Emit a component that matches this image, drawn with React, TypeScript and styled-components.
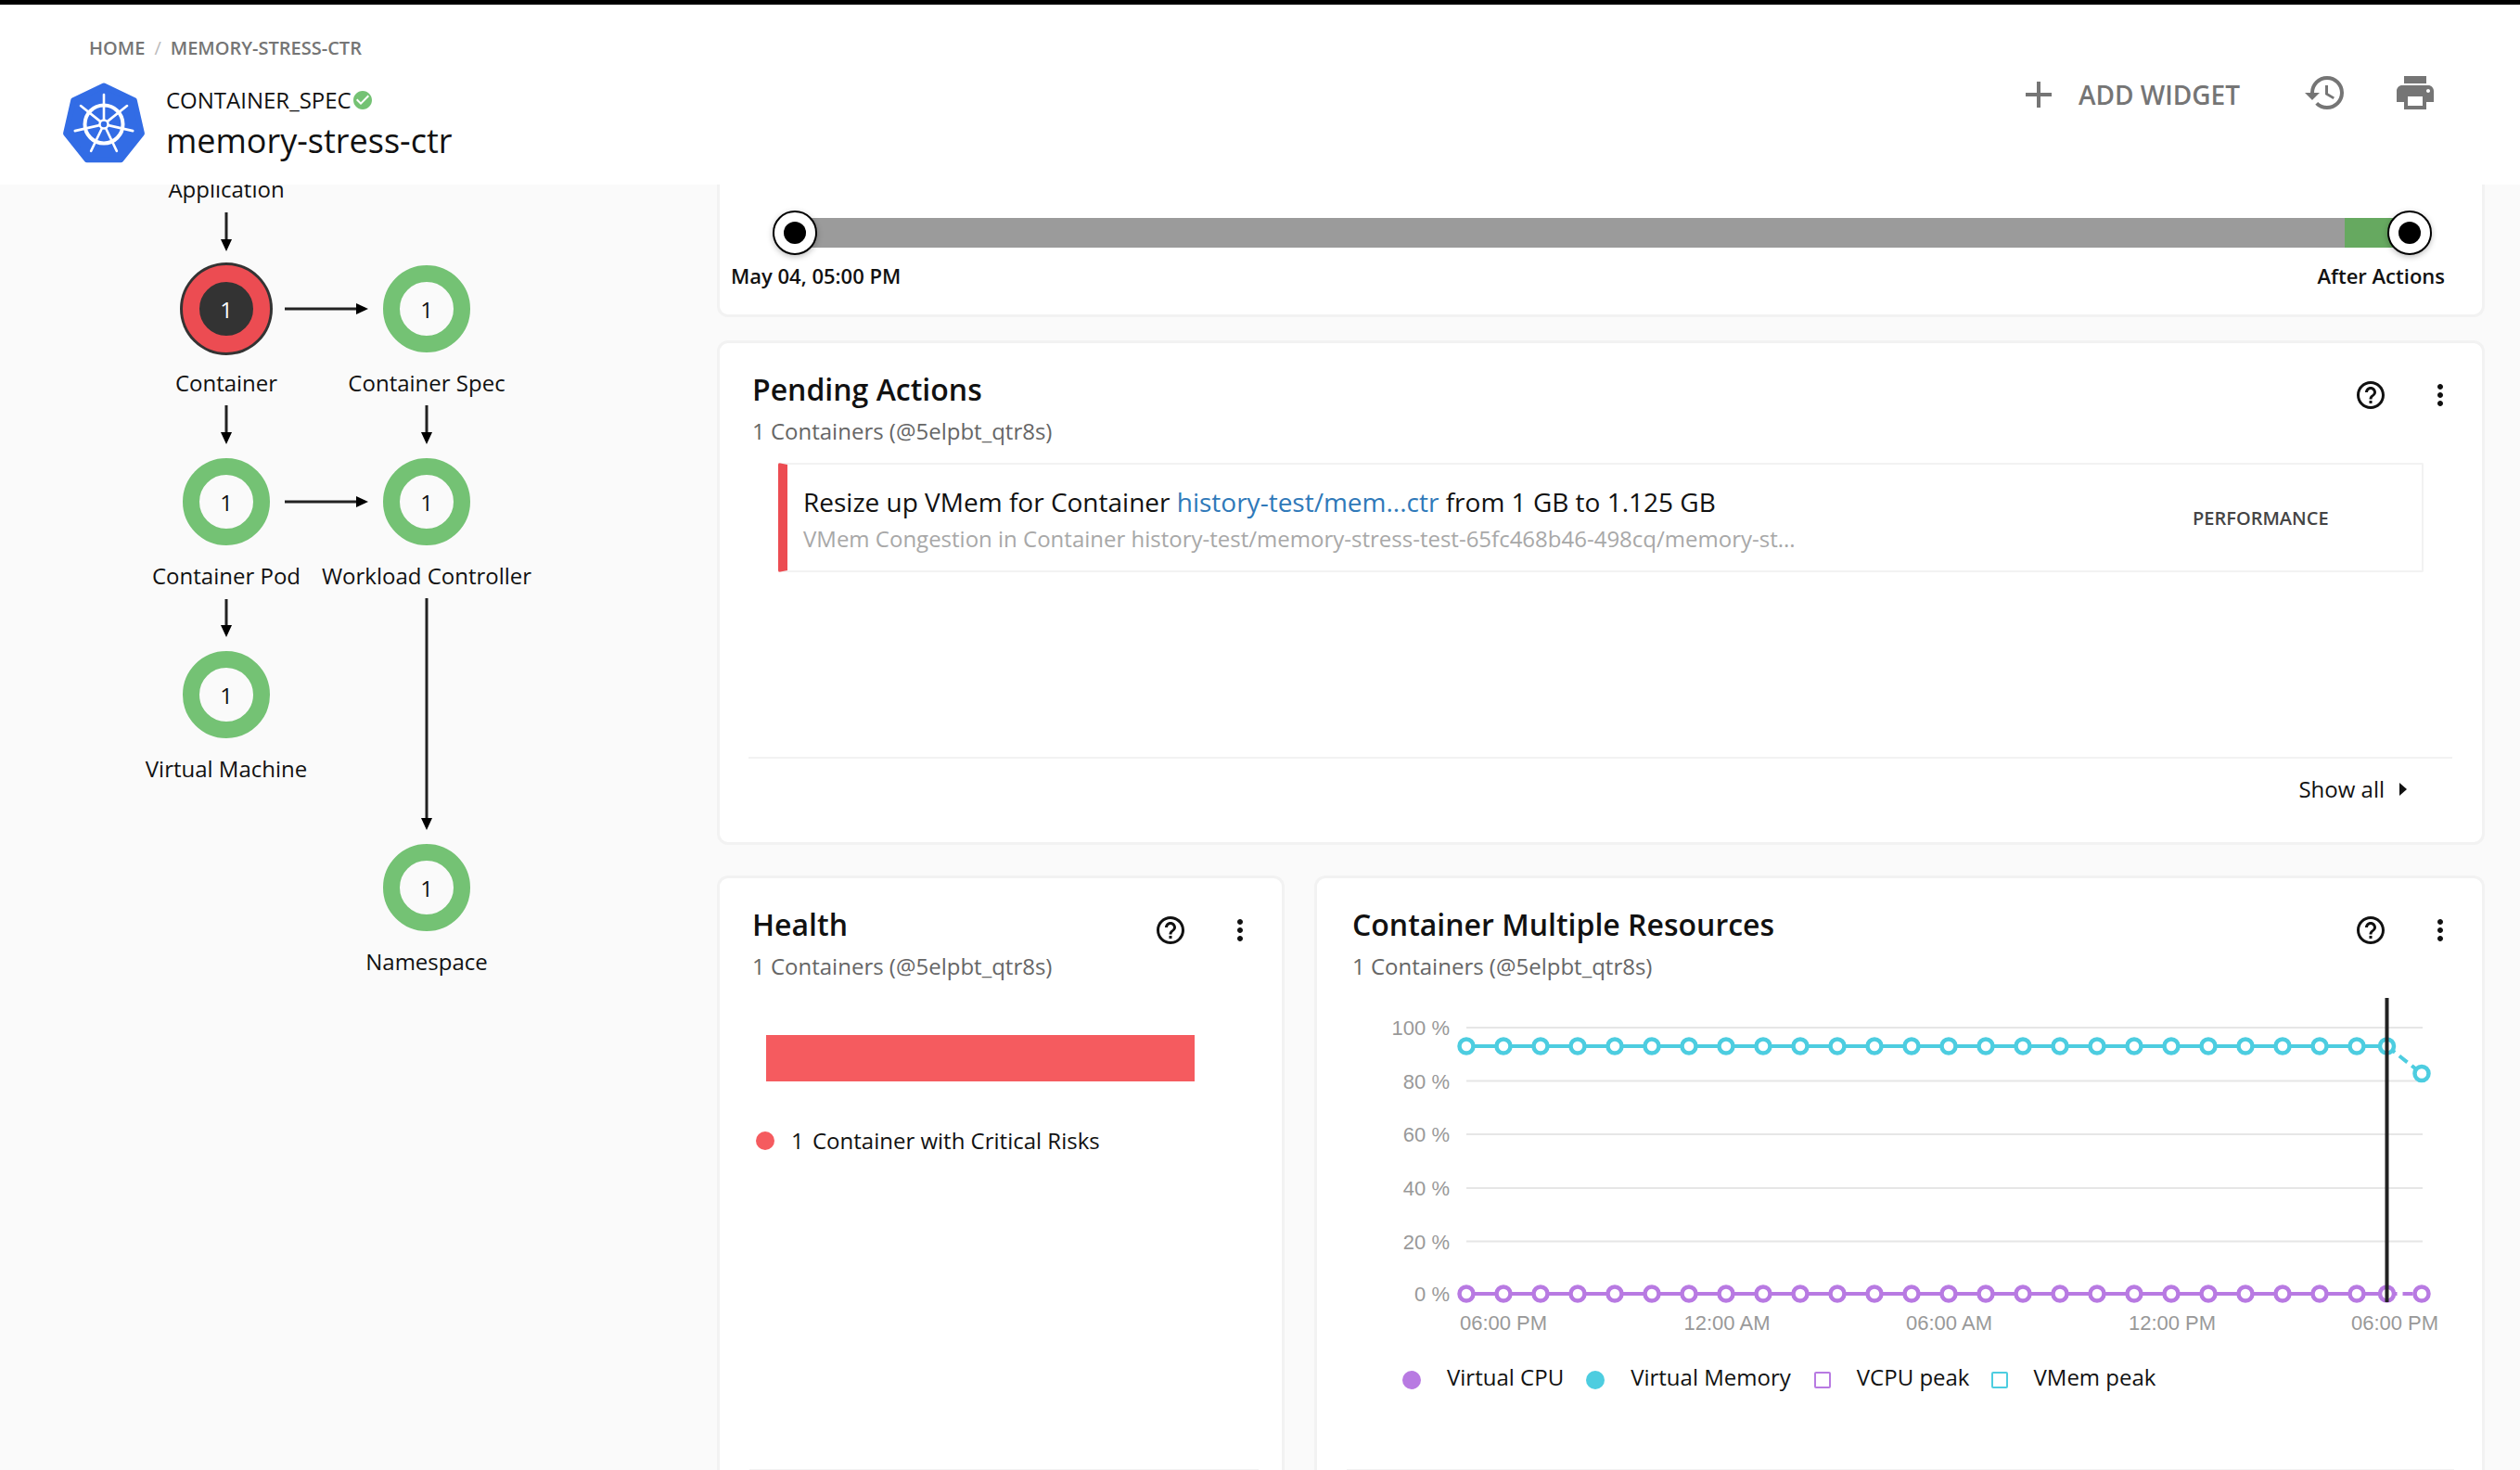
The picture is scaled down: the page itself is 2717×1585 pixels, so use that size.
import React from "react";
import styled, { createGlobalStyle } from "styled-components";
import { MdAdd, MdCheckCircle, MdHelpOutline, MdHistory, MdMoreVert, MdPrint } from "react-icons/md";

const GlobalStyle = createGlobalStyle`
  html, body {
    margin: 0;
    background: #fafafa;
    overflow: hidden;
    font-family: "Open Sans", "Liberation Sans", sans-serif;
  }
`;

const Page = styled.div`
  width: 2717px;
  height: 1585px;
  display: flex;
  flex-direction: column;
  overflow: hidden;
`;

const Header = styled.header`
  flex: none;
  box-sizing: border-box;
  height: 199px;
  border-top: 5px solid #000;
  background: #fff;
  display: flex;
  justify-content: space-between;
  padding: 33px 89px 0 67px;
  z-index: 1;
`;

const HeaderLeft = styled.div`
  display: flex;
  flex-direction: column;
`;

const Breadcrumbs = styled.div`
  margin-left: 29px;
  display: flex;
  gap: 10px;
  font-size: 20px;
  font-weight: 600;
  line-height: 28px;
  color: #757575;
`;

const Slash = styled.span`
  color: #bbb;
  font-weight: 400;
`;

const TitleRow = styled.div`
  margin-top: 23px;
  display: flex;
  gap: 22px;
`;

const TitleText = styled.div`
  padding-top: 3px;
  color: #111;
`;

const TypeRow = styled.div`
  display: flex;
  align-items: center;
  font-size: 24px;
  line-height: 32px;
`;

const EntityName = styled.div`
  margin-top: 4px;
  font-size: 36px;
  line-height: 48px;
`;

const HeaderActions = styled.div`
  margin-top: 38px;
  display: flex;
  align-items: flex-start;
  color: #757575;
`;

const AddWidget = styled.div`
  display: flex;
  align-items: center;
  gap: 19px;
  margin-right: 68px;
  font-size: 28px;
  font-weight: 600;
  line-height: 52px;
`;

const PrintWrap = styled.div`
  margin-left: 49px;
  height: 48px;
`;

const Body = styled.div`
  flex: 1;
  min-height: 0;
  display: flex;
`;

const Sidebar = styled.aside`
  position: relative;
  flex: none;
  width: 773px;
  overflow: hidden;
`;

const ArrowLayer = styled.svg`
  position: absolute;
  inset: 0;
  width: 773px;
  height: 1386px;
`;

const GraphNode = styled.div<{ $x: number; $y: number }>`
  position: absolute;
  left: ${(p) => p.$x}px;
  top: ${(p) => p.$y}px;
  width: 0;
  display: flex;
  flex-direction: column;
  align-items: center;
`;

const Ring = styled.div<{ $critical?: boolean }>`
  flex: none;
  width: 94px;
  height: 94px;
  box-sizing: border-box;
  border-radius: 50%;
  border: 18px solid ${(p) => (p.$critical ? "#ec4c52" : "#74c274")};
  background: ${(p) => (p.$critical ? "#333" : "#fafafa")};
  color: ${(p) => (p.$critical ? "#fff" : "#111")};
  box-shadow: ${(p) => (p.$critical ? "0 0 0 3px #333" : "none")};
  display: flex;
  align-items: center;
  justify-content: center;
  font-size: 24px;
`;

const NodeLabel = styled.div`
  margin-top: 17px;
  font-size: 24px;
  line-height: 32px;
  color: #111;
  white-space: nowrap;
`;

const ClippedLabel = styled(NodeLabel)`
  margin-top: 0;
`;

const Content = styled.main`
  flex: none;
  width: 1906px;
  display: flex;
  flex-direction: column;
`;

const Card = styled.section<{ $height?: number }>`
  box-sizing: border-box;
  ${(p) => (p.$height ? `height: ${p.$height}px;` : "")}
  background: #fff;
  border: 3px solid #f2f2f2;
  border-radius: 12px;
  display: flex;
  flex-direction: column;
`;

const TimelineCard = styled(Card)`
  flex: none;
  height: 143px;
  border-top: none;
  border-top-left-radius: 0;
  border-top-right-radius: 0;
`;

const Track = styled.div`
  position: relative;
  margin: 36px 0 0 81px;
  width: 1741px;
  height: 32px;
  background: #9b9b9b;
`;

const TrackFill = styled.div`
  position: absolute;
  right: 0;
  top: 0;
  bottom: 0;
  width: 70px;
  background: #66a960;
`;

const Knob = styled.div<{ $side: "left" | "right" }>`
  position: absolute;
  top: 50%;
  ${(p) => p.$side}: 0;
  width: 48px;
  height: 48px;
  box-sizing: border-box;
  transform: translate(${(p) => (p.$side === "left" ? "-50%" : "50%")}, -50%);
  border: 2px solid #000;
  border-radius: 50%;
  background: #fff;
  box-shadow: 0 2px 6px rgba(0, 0, 0, 0.25);
  display: flex;
  align-items: center;
  justify-content: center;

  &::after {
    content: "";
    width: 24px;
    height: 24px;
    border-radius: 50%;
    background: #000;
  }
`;

const TrackLabels = styled.div`
  margin-top: 15px;
  padding: 0 40px 0 12px;
  display: flex;
  justify-content: space-between;
  font-size: 22px;
  font-weight: 600;
  line-height: 30px;
  color: #111;
`;

const PendingCard = styled(Card)`
  flex: none;
  margin-top: 25px;
  height: 544px;
`;

const CardHead = styled.div`
  flex: none;
  display: flex;
  justify-content: space-between;
  padding: 28px 27px 0 35px;
`;

const ChartHead = styled(CardHead)`
  padding-left: 38px;
`;

const CardTitle = styled.h2`
  margin: 0;
  font-size: 32px;
  font-weight: 600;
  line-height: 44px;
  color: #111;
`;

const CardSubtitle = styled.div`
  margin-top: 7px;
  font-size: 24px;
  line-height: 32px;
  color: #666;
`;

const CardIcons = styled.div`
  margin-top: 10px;
  display: flex;
  gap: 39px;
  height: 36px;
  color: #111;
`;

const ActionRow = styled.div`
  margin: 18px 63px 0;
  height: 118px;
  box-sizing: border-box;
  flex: none;
  display: flex;
  border: 2px solid #f2f2f2;
  border-left: 10px solid #ec4c52;
  border-radius: 2px;
`;

const ActionText = styled.div`
  flex: none;
  width: 1515px;
  box-sizing: border-box;
  padding: 21px 0 0 17px;
`;

const ActionTitle = styled.div`
  font-size: 28px;
  line-height: 38px;
  color: #111;
`;

const EntityLink = styled.span`
  color: #2f79b9;
`;

const ActionDetail = styled.div`
  margin-top: 5px;
  font-size: 24px;
  line-height: 32px;
  color: #a8a8a8;
`;

const ActionCategory = styled.div`
  align-self: center;
  font-size: 20px;
  font-weight: 600;
  color: #444;
`;

const Spacer = styled.div`
  flex: 1;
`;

const CardFooter = styled.div`
  flex: none;
  height: 92px;
  box-sizing: border-box;
  margin: 0 32px 0 31px;
  border-top: 2px solid #f2f2f2;
  padding: 17px 49px 0 0;
  display: flex;
  justify-content: flex-end;
  align-items: flex-start;
  gap: 16px;
  font-size: 24px;
  line-height: 32px;
  color: #111;
`;

const Triangle = styled.span`
  margin-top: 9px;
  width: 0;
  height: 0;
  border-style: solid;
  border-width: 7px 0 7px 8px;
  border-color: transparent transparent transparent #111;
`;

const WidgetRow = styled.div`
  margin-top: 33px;
  display: flex;
  gap: 32px;
`;

const WidgetCard = styled(Card)<{ $width: number }>`
  flex: none;
  width: ${(p) => p.$width}px;
  height: 700px;
`;

const WidgetMain = styled.div`
  flex: none;
  height: 637px;
`;

const WidgetRule = styled.div<{ $left: number; $right: number }>`
  margin: 0 ${(p) => p.$right}px 0 ${(p) => p.$left}px;
  border-top: 2px solid #f2f2f2;
`;

const HealthBar = styled.div`
  margin: 58px 0 0 50px;
  width: 462px;
  height: 50px;
  background: #f55b5f;
`;

const HealthLegend = styled.div`
  margin: 48px 0 0 39px;
  display: flex;
  align-items: center;
  gap: 18px;
  font-size: 24px;
  line-height: 32px;
  color: #111;
`;

const RiskCount = styled.span`
  margin-right: 3px;
`;

const Dot = styled.span<{ $color: string }>`
  flex: none;
  width: 20px;
  height: 20px;
  border-radius: 50%;
  background: ${(p) => p.$color};
`;

const ChartSvg = styled.svg`
  display: block;
  margin-left: 1px;
  width: 1254px;
  height: 390px;
`;

const ChartLegend = styled.div`
  margin: 21px 0 0 92px;
  display: flex;
  align-items: center;
  font-size: 24px;
  line-height: 32px;
  color: #111;
`;

const LegendItem = styled.div<{ $gap: number; $spacing: number }>`
  display: flex;
  align-items: center;
  gap: ${(p) => p.$gap}px;
  margin-right: ${(p) => p.$spacing}px;
`;

const LegendDot = styled(Dot)`
  margin-top: 6px;
`;

const LegendSquare = styled.span<{ $color: string }>`
  flex: none;
  width: 18px;
  height: 18px;
  margin-top: 6px;
  box-sizing: border-box;
  border: 2px solid ${(p) => p.$color};
  border-radius: 2px;
`;

const CYAN = "#4dcde0";
const PURPLE = "#b87ae2";
const KUBE_BLUE = "#326ce5";

function KubeLogo() {
  const spokes = [0, 1, 2, 3, 4, 5, 6].map((k) => (k * 360) / 7);
  const hull = spokes
    .map((a) => {
      const r = ((a - 90) * Math.PI) / 180;
      return `${45 + 42 * Math.cos(r)},${45.5 + 42 * Math.sin(r)}`;
    })
    .join(" ");
  return (
    <svg width="90" height="88" viewBox="0 0 90 88">
      <polygon points={hull} fill={KUBE_BLUE} stroke={KUBE_BLUE} strokeWidth="6" strokeLinejoin="round" />
      <g stroke="#fff" fill="none" strokeLinecap="round">
        <circle cx="45" cy="45" r="20.5" strokeWidth="4" />
        {spokes.map((a) => (
          <line key={a} x1="45" y1="40" x2="45" y2="13" strokeWidth="2.6" transform={`rotate(${a} 45 45)`} />
        ))}
        <circle cx="45" cy="45" r="4.5" fill={KUBE_BLUE} strokeWidth="2.5" />
      </g>
    </svg>
  );
}

function GraphArrows() {
  const down = (x: number, y1: number, y2: number) => (
    <g key={`${x}-${y1}`}>
      <line x1={x} y1={y1} x2={x} y2={y2 - 10} stroke="#222" strokeWidth="3" />
      <polygon points={`${x - 6},${y2 - 13} ${x + 6},${y2 - 13} ${x},${y2}`} fill="#000" />
    </g>
  );
  const right = (y: number, x1: number, x2: number) => (
    <g key={`r-${y}`}>
      <line x1={x1} y1={y} x2={x2 - 10} y2={y} stroke="#222" strokeWidth="3" />
      <polygon points={`${x2 - 13},${y - 6} ${x2 - 13},${y + 6} ${x2},${y}`} fill="#000" />
    </g>
  );
  return (
    <ArrowLayer>
      {down(244, 30, 72)}
      {down(244, 238, 280)}
      {down(244, 447, 488)}
      {down(460, 238, 280)}
      {down(460, 446, 696)}
      {right(134, 307, 397)}
      {right(342, 307, 397)}
    </ArrowLayer>
  );
}

const graphNodes = [
  { name: "Container", x: 244, y: 87, critical: true },
  { name: "Container Spec", x: 460, y: 87 },
  { name: "Container Pod", x: 244, y: 295 },
  { name: "Workload Controller", x: 460, y: 295 },
  { name: "Virtual Machine", x: 244, y: 503 },
  { name: "Namespace", x: 460, y: 711 },
];

function ResourceChart() {
  const xs = [...Array.from({ length: 25 }, (_, k) => 160 + 40 * k), 1152.5];
  const lastX = 1190;
  const grid = [50, 107.5, 165, 223, 280.5, 337];
  const yLabels = ["100 %", "80 %", "60 %", "40 %", "20 %", "0 %"];
  const xLabels: [number, string][] = [
    [200, "06:00 PM"],
    [441, "12:00 AM"],
    [680.5, "06:00 AM"],
    [921, "12:00 PM"],
    [1161, "06:00 PM"],
  ];
  const series: [string, number, number][] = [
    [CYAN, 70, 99.5],
    [PURPLE, 337, 337],
  ];
  return (
    <ChartSvg viewBox="0 0 1254 390">
      {grid.map((y, i) => (
        <g key={y}>
          {i < 5 && <line x1="160" x2="1191" y1={y} y2={y} stroke="#e6e6e6" strokeWidth="2" />}
          <text
            x="142"
            y={y + 8}
            textAnchor="end"
            fontFamily="Liberation Sans"
            fontSize="22"
            fill="#999"
          >
            {yLabels[i]}
          </text>
        </g>
      ))}
      {xLabels.map(([x, label]) => (
        <text
          key={x}
          x={x}
          y="376"
          textAnchor="middle"
          fontFamily="Liberation Sans"
          fontSize="22"
          fill="#999"
        >
          {label}
        </text>
      ))}
      {series.map(([color, y, endY]) => (
        <g key={color} stroke={color} fill="none" strokeWidth="4">
          <line x1="160" x2="1152.5" y1={y} y2={y} />
          <line x1="1152.5" x2={lastX} y1={y} y2={endY} strokeDasharray="11 6" />
          {xs.map((x) => (
            <circle key={x} cx={x} cy={y} r="7.5" strokeWidth="4.5" fill="#fff" />
          ))}
          <circle cx={lastX} cy={endY} r="7.5" strokeWidth="4.5" fill="#fff" />
        </g>
      ))}
      <line x1="1152.5" x2="1152.5" y1="18" y2="346" stroke="#222" strokeWidth="4" />
    </ChartSvg>
  );
}

export default function App() {
  return (
    <Page>
      <GlobalStyle />
      <Header>
        <HeaderLeft>
          <Breadcrumbs>
            <span>HOME</span>
            <Slash>/</Slash>
            <span>MEMORY-STRESS-CTR</span>
          </Breadcrumbs>
          <TitleRow>
            <KubeLogo />
            <TitleText>
              <TypeRow>
                CONTAINER_SPEC
                <MdCheckCircle size={24} color="#74c274" />
              </TypeRow>
              <EntityName>memory-stress-ctr</EntityName>
            </TitleText>
          </TitleRow>
        </HeaderLeft>
        <HeaderActions>
          <AddWidget>
            <MdAdd size={48} />
            ADD WIDGET
          </AddWidget>
          <MdHistory size={48} />
          <PrintWrap>
            <MdPrint size={48} />
          </PrintWrap>
        </HeaderActions>
      </Header>
      <Body>
        <Sidebar>
          <GraphArrows />
          <GraphNode $x={244} $y={-11}>
            <ClippedLabel>Application</ClippedLabel>
          </GraphNode>
          {graphNodes.map((n) => (
            <GraphNode key={n.name} $x={n.x} $y={n.y}>
              <Ring $critical={n.critical}>1</Ring>
              <NodeLabel>{n.name}</NodeLabel>
            </GraphNode>
          ))}
        </Sidebar>
        <Content>
          <TimelineCard>
            <Track>
              <TrackFill />
              <Knob $side="left" />
              <Knob $side="right" />
            </Track>
            <TrackLabels>
              <span>May 04, 05:00 PM</span>
              <span>After Actions</span>
            </TrackLabels>
          </TimelineCard>

          <PendingCard>
            <CardHead>
              <div>
                <CardTitle>Pending Actions</CardTitle>
                <CardSubtitle>1 Containers (@5elpbt_qtr8s)</CardSubtitle>
              </div>
              <CardIcons>
                <MdHelpOutline size={36} />
                <MdMoreVert size={36} />
              </CardIcons>
            </CardHead>
            <ActionRow>
              <ActionText>
                <ActionTitle>
                  Resize up VMem for Container <EntityLink>history-test/mem...ctr</EntityLink> from 1 GB to
                  1.125 GB
                </ActionTitle>
                <ActionDetail>
                  VMem Congestion in Container history-test/memory-stress-test-65fc468b46-498cq/memory-st...
                </ActionDetail>
              </ActionText>
              <ActionCategory>PERFORMANCE</ActionCategory>
            </ActionRow>
            <Spacer />
            <CardFooter>
              Show all
              <Triangle />
            </CardFooter>
          </PendingCard>

          <WidgetRow>
            <WidgetCard $width={612}>
              <WidgetMain>
                <CardHead>
                  <div>
                    <CardTitle>Health</CardTitle>
                    <CardSubtitle>1 Containers (@5elpbt_qtr8s)</CardSubtitle>
                  </div>
                  <CardIcons>
                    <MdHelpOutline size={36} />
                    <MdMoreVert size={36} />
                  </CardIcons>
                </CardHead>
                <HealthBar />
                <HealthLegend>
                  <Dot $color="#f55b5f" />
                  <span>
                    <RiskCount>1</RiskCount> Container with Critical Risks
                  </span>
                </HealthLegend>
              </WidgetMain>
              <WidgetRule $left={32} $right={25} />
            </WidgetCard>

            <WidgetCard $width={1262}>
              <WidgetMain>
                <ChartHead>
                  <div>
                    <CardTitle>Container Multiple Resources</CardTitle>
                    <CardSubtitle>1 Containers (@5elpbt_qtr8s)</CardSubtitle>
                  </div>
                  <CardIcons>
                    <MdHelpOutline size={36} />
                    <MdMoreVert size={36} />
                  </CardIcons>
                </ChartHead>
                <ResourceChart />
                <ChartLegend>
                  <LegendItem $gap={28} $spacing={24}>
                    <LegendDot $color={PURPLE} />
                    Virtual CPU
                  </LegendItem>
                  <LegendItem $gap={28} $spacing={25}>
                    <LegendDot $color={CYAN} />
                    Virtual Memory
                  </LegendItem>
                  <LegendItem $gap={28} $spacing={24}>
                    <LegendSquare $color={PURPLE} />
                    VCPU peak
                  </LegendItem>
                  <LegendItem $gap={27} $spacing={0}>
                    <LegendSquare $color={CYAN} />
                    VMem peak
                  </LegendItem>
                </ChartLegend>
              </WidgetMain>
              <WidgetRule $left={32} $right={30} />
            </WidgetCard>
          </WidgetRow>
        </Content>
      </Body>
    </Page>
  );
}
